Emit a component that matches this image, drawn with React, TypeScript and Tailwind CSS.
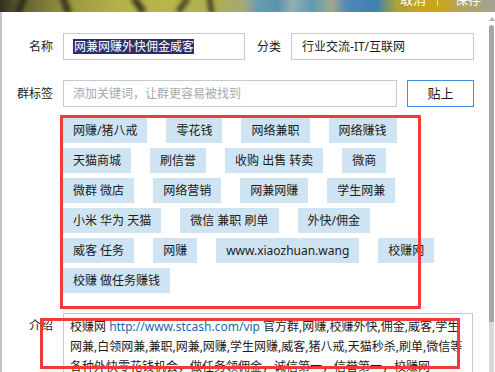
import React from 'react';

// ---------------------------------------------------------------------------
// Group settings form (QQ-style), with red annotation boxes on top
// ---------------------------------------------------------------------------

const tags: string[] = [
  '网赚/猪八戒',
  '零花钱',
  '网络兼职',
  '网络赚钱',
  '天猫商城',
  '刷信誉',
  '收购 出售 转卖',
  '微商',
  '微群 微店',
  '网络营销',
  '网兼网赚',
  '学生网兼',
  '小米 华为 天猫',
  '微信 兼职 刷单',
  '外快/佣金',
  '威客 任务',
  '网赚',
  'www.xiaozhuan.wang',
  '校赚网',
  '校赚 做任务赚钱',
];

function TopStrip() {
  return (
    <div className="relative h-[12px] overflow-hidden bg-[linear-gradient(90deg,#2f2f1c_0%,#5e5d30_4%,#7d7a38_9%,#9c9a40_15%,#b3b349_24%,#b7b64c_34%,#adad52_44%,#a6a978_49%,#6c9db0_52%,#5a94ad_56%,#8fb0b4_59%,#5f9ab4_63%,#a2a68a_67%,#4f8ab8_70%,#3d80b2_76%,#a9a23a_80%,#c5a51c_85%,#c8a61e_89%,#b3a45a_93%,#a4a39a_100%)]">
      {/* blurred dark strokes of the background photo */}
      <div className="absolute left-[18px] top-[-4px] h-[18px] w-[6px] rotate-[25deg] bg-[#2a2a18] blur-[2px]" />
      <div className="absolute left-[62px] top-[-4px] h-[18px] w-[7px] rotate-[-20deg] bg-[#3a381e] blur-[2px]" />
      <div className="absolute left-[135px] top-[-4px] h-[18px] w-[7px] rotate-[-35deg] bg-[#3c3a1e] blur-[2px]" />
      <div className="absolute left-[180px] top-[-4px] h-[18px] w-[6px] rotate-[35deg] bg-[#4a4622] blur-[2px]" />
      <div className="absolute left-[208px] top-[-4px] h-[18px] w-[5px] rotate-[-10deg] bg-[#3e3c20] blur-[2px]" />

      <div className="relative flex items-start justify-end pr-[14px] text-[13px] leading-[13px] text-white">
        <span className="-mt-[7px]">取消</span>
        <span className="ml-[11px] h-[6px] w-px bg-white/60" />
        <span className="-mt-[7px] ml-[17px]">保存</span>
      </div>
    </div>
  );
}

function Scrollbar() {
  return (
    <div className="flex w-[8px] flex-col">
      <div className="flex h-[13px] items-center pl-[2px]">
        <div className="h-0 w-0 border-x-[3px] border-b-[4px] border-x-transparent border-b-[#b0b0b0]" />
      </div>
      <div className="ml-[2px] h-[297px] w-[5px] rounded-t-[3px] bg-[#a7a7a7]" />
      <div className="ml-[2px] w-[5px] flex-1 bg-[#d8d8d8]" />
    </div>
  );
}

export default function App() {
  return (
    <div className="relative h-[372px] w-[495px] overflow-hidden bg-white font-['Noto_Sans','Noto_Sans_CJK_SC',sans-serif] text-[12px] text-[#1b1b1b]">
      <TopStrip />

      <div className="flex h-[360px]">
        <div className="w-[2px] bg-[#bcc5cd]" />

        <div className="flex-1 pt-[21px]">
          {/* 名称 / 分类 */}
          <div className="flex h-[27px] items-center">
            <div className="w-[51px] text-right">名称</div>
            <div className="ml-[10px] flex h-[27px] w-[182px] items-center border border-[#c9c9c9] pl-[9px]">
              <span className="bg-[#2f2e63] pl-px leading-[15px] text-white">网兼网赚外快佣金威客</span>
            </div>
            <div className="ml-[12px]">分类</div>
            <div className="ml-[10px] flex h-[27px] w-[183px] items-center border border-[#c9c9c9] pl-[10px]">
              行业交流-IT/互联网
            </div>
          </div>

          {/* 群标签 */}
          <div className="mt-[20px] flex h-[27px] items-center">
            <div className="w-[51px] text-right">群标签</div>
            <div className="ml-[10px] flex h-[27px] w-[334px] items-center border border-[#c9c9c9] pl-[9px] text-[#a9a9a9]">
              添加关键词，让群更容易被找到
            </div>
            <button className="ml-[10px] h-[27px] w-[67px] border border-[#3d8fe6] bg-white text-[13px] text-[#1b1b1b]">
              贴上
            </button>
          </div>

          {/* Tags */}
          <div className="ml-[61px] mt-[11px] flex w-[390px] flex-wrap gap-x-[19px] gap-y-[5px]">
            {tags.map((t) => (
              <div
                key={t}
                className="h-[25px] whitespace-nowrap bg-[#cfe4f2] px-[10px] leading-[25px]"
              >
                {t}
              </div>
            ))}
          </div>

          {/* 介绍 */}
          <div className="mt-[20px] flex">
            <div className="w-[51px] pt-[3px] text-right leading-[20px]">介绍</div>
            <div className="ml-[10px] h-[80px] w-[410px] overflow-hidden border border-[#c9c9c9] pl-[6px] pt-[3px] leading-[20px]">
              <div className="whitespace-nowrap">
                校赚网 <span className="text-[#2367b0]">http://www.stcash.com/vip</span> 官方群,网赚,校赚外快,佣金,威客,学生
              </div>
              <div className="whitespace-nowrap">
                网兼,白领网兼,兼职,网兼,网赚,学生网赚,威客,猪八戒,天猫秒杀,刷单,微信等
              </div>
              <div className="whitespace-nowrap">
                各种外快零花钱机会，做任务领佣金，诚信第一，信誉第一，校赚网
              </div>
            </div>
          </div>
        </div>

        <Scrollbar />
      </div>

      {/* red annotation boxes drawn over the screenshot */}
      <div className="pointer-events-none absolute left-[60px] top-[115px] h-[194px] w-[361px] border-[3px] border-[#f23a3a]" />
      <div className="pointer-events-none absolute left-[40px] top-[318px] h-[51px] w-[420px] border-[3px] border-[#f23a3a]" />
    </div>
  );
}
